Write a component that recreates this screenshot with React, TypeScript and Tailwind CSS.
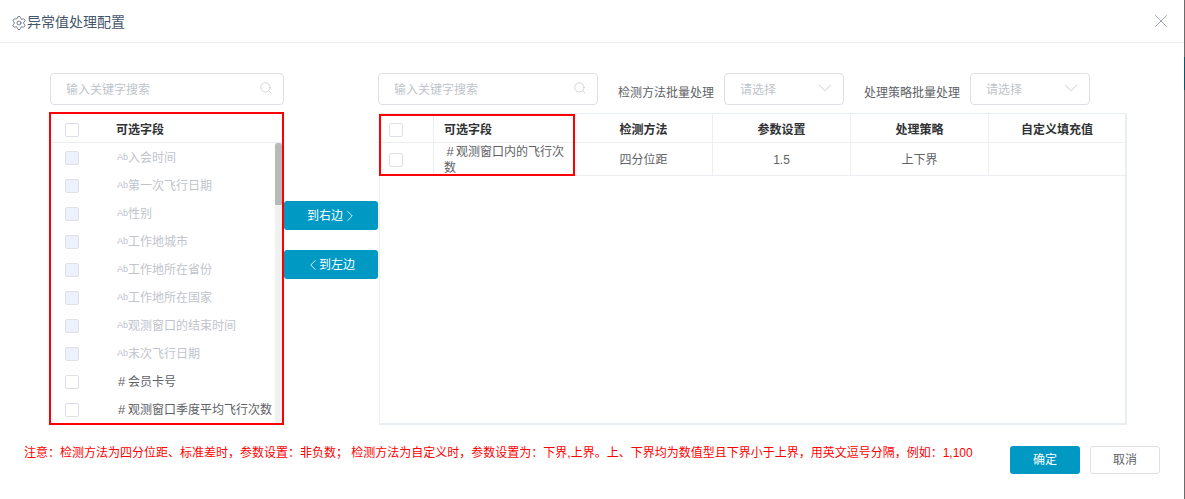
import { ChevronDown, ChevronLeft, ChevronRight, Search, Settings, X } from "lucide-react";

const fields = [
  { name: "入会时间", type: "text" },
  { name: "第一次飞行日期", type: "text" },
  { name: "性别", type: "text" },
  { name: "工作地城市", type: "text" },
  { name: "工作地所在省份", type: "text" },
  { name: "工作地所在国家", type: "text" },
  { name: "观测窗口的结束时间", type: "text" },
  { name: "末次飞行日期", type: "text" },
  { name: "会员卡号", type: "num" },
  { name: "观测窗口季度平均飞行次数", type: "num" },
];

const Checkbox = ({ disabled = false }: { disabled?: boolean }) => (
  <span
    className={`block w-[14px] h-[14px] shrink-0 rounded-[2px] border border-[#dcdfe6] ${
      disabled ? "bg-[#edf2fc]" : "bg-white"
    }`}
  />
);

const SearchInput = ({ className }: { className: string }) => (
  <div
    className={`flex items-center justify-between h-[32px] rounded-[4px] border border-[#dcdfe6] bg-white pl-[15px] pr-[10px] ${className}`}
  >
    <span className="pt-[2px] text-[12px] text-[#c0c4cc]">输入关键字搜索</span>
    <Search size={14} strokeWidth={1.2} className="-mt-[2px] text-[#c0c4cc]" />
  </div>
);

const BatchSelect = ({ label }: { label: string }) => (
  <div className="flex items-start ml-[20px]">
    <span className="mt-[12px] mr-[10px] text-[12px] leading-[16px] text-[#606266]">{label}</span>
    <div className="flex items-center justify-between w-[120px] h-[32px] rounded-[4px] border border-[#dcdfe6] bg-white pl-[15px] pr-[7px]">
      <span className="pt-[2px] text-[12px] text-[#c0c4cc]">请选择</span>
      <ChevronDown size={22} strokeWidth={0.9} className="-mt-[2px] text-[#c0c4cc]" />
    </div>
  </div>
);

const App = () => {
  return (
    <div className="flex w-[1185px] h-[499px] overflow-hidden bg-white font-['Liberation_Sans','Noto_Sans_CJK_SC',sans-serif]">
      <div className="flex-1 flex flex-col">
        <div className="flex items-center justify-between h-[43px] border-b border-[#ebeef5] pl-[11px] pr-[12px] pt-[3px]">
          <div className="flex items-center text-[14px] text-[#44566c]">
            <Settings size={16} strokeWidth={1.1} />
            <span>异常值处理配置</span>
          </div>
          <X size={22} strokeWidth={0.9} className="-mt-[3px] text-[#8c939d]" />
        </div>

        <div className="flex pt-[30px] pl-[49px]">
          <div className="w-[235px]">
            <SearchInput className="ml-px" />
            <div className="mt-[7px] h-[313px] border-2 border-[#ff0000] flex flex-col">
              <div className="flex items-center h-[29px] shrink-0 border-b border-[#ebeef5] pl-[14px] pt-[3px]">
                <Checkbox />
                <span className="ml-[37px] text-[12px] font-bold text-[#303133]">可选字段</span>
              </div>
              <div className="flex flex-1 min-h-0">
                <div className="flex-1 pt-px overflow-hidden">
                  {fields.map((f) => (
                    <div key={f.name} className="flex items-center h-[28px] pl-[14px]">
                      <Checkbox disabled={f.type === "text"} />
                      {f.type === "text" ? (
                        <span className="ml-[38px] w-[11px] text-[9px] text-[#c0c4cc]">Ab</span>
                      ) : (
                        <span className="ml-[38px] w-[11px] pl-px text-[13px] text-[#606266]">#</span>
                      )}
                      <span
                        className={`text-[12px] whitespace-nowrap ${
                          f.type === "text" ? "text-[#c0c4cc]" : "text-[#606266]"
                        }`}
                      >
                        {f.name}
                      </span>
                    </div>
                  ))}
                </div>
                <div className="w-[7px] shrink-0 bg-[#f1f1f1]">
                  <div className="h-[62px] bg-[#b9b9b9] rounded-t-[3px]" />
                </div>
              </div>
            </div>
          </div>

          <div className="w-[94px] pt-[128px] flex flex-col gap-[20px]">
            <button className="flex items-center pl-[23px] h-[29px] rounded-[3px] bg-[#0099c4] text-[12px] text-white">
              到右边
              <ChevronRight size={18} strokeWidth={1.1} className="-ml-[2px]" />
            </button>
            <button className="flex items-center pl-[20px] h-[29px] rounded-[3px] bg-[#0099c4] text-[12px] text-white">
              <ChevronLeft size={18} strokeWidth={1.1} className="-mr-[3px]" />
              到左边
            </button>
          </div>

          <div className="w-[749px]">
            <div className="flex">
              <SearchInput className="w-[220px]" />
              <BatchSelect label="检测方法批量处理" />
              <BatchSelect label="处理策略批量处理" />
            </div>
            <div className="relative mt-[8px] ml-px h-[312px] w-[748px] border-t border-l border-r-2 border-b-2 border-[#e9edf4]">
              <div className="grid grid-cols-[54px_141px_138px_138px_138px_136px] h-[29px] border-b border-[#ebeef5] text-[12px] font-bold text-[#303133]">
                <div className="flex items-center border-r border-[#ebeef5] pl-[9px] pt-[3px]">
                  <Checkbox />
                </div>
                <div className="flex items-center pl-[10px] pt-[3px]">可选字段</div>
                <div className="flex items-center justify-center border-r border-[#ebeef5] pt-[3px]">检测方法</div>
                <div className="flex items-center justify-center border-r border-[#ebeef5] pt-[3px]">参数设置</div>
                <div className="flex items-center justify-center border-r border-[#ebeef5] pt-[3px]">处理策略</div>
                <div className="flex items-center justify-center pt-[3px]">自定义填充值</div>
              </div>
              <div className="grid grid-cols-[54px_141px_138px_138px_138px_136px] h-[33px] border-b border-[#ebeef5] text-[12px] text-[#606266]">
                <div className="flex items-center border-r border-[#ebeef5] pl-[9px]">
                  <Checkbox />
                </div>
                <div className="px-[10px] pt-px leading-[16px]">
                  <span className="inline-block w-[12px] text-center text-[13px]">#</span>
                  观测窗口内的飞行次数
                </div>
                <div className="flex items-center justify-center border-r border-[#ebeef5]">四分位距</div>
                <div className="flex items-center justify-center border-r border-[#ebeef5]">1.5</div>
                <div className="flex items-center justify-center border-r border-[#ebeef5]">上下界</div>
                <div />
              </div>
              <div className="absolute -left-px top-0 w-[196px] h-[62px] border-2 border-[#ff0000]" />
            </div>
          </div>
        </div>

        <div className="flex items-start justify-between mt-[21px] pl-[24px] pr-[24px]">
          <p className="text-[12px] leading-[14px] text-[#ff0000] whitespace-pre">
            注意：检测方法为四分位距、标准差时，参数设置：非负数； 检测方法为自定义时，参数设置为：下界,上界。上、下界均为数值型且下界小于上界，用英文逗号分隔，例如：1,100
          </p>
          <div className="flex gap-[10px]">
            <button className="w-[70px] h-[28px] rounded-[3px] bg-[#0099c4] text-[12px] text-white">确定</button>
            <button className="w-[70px] h-[28px] rounded-[3px] border border-[#dcdfe6] bg-white text-[12px] text-[#606266]">
              取消
            </button>
          </div>
        </div>
      </div>
      <div className="w-px flex flex-col bg-[#6b6b6b]">
        <div className="mt-[57px] h-[33px] bg-[#0b5566]" />
      </div>
    </div>
  );
};

export default App;
